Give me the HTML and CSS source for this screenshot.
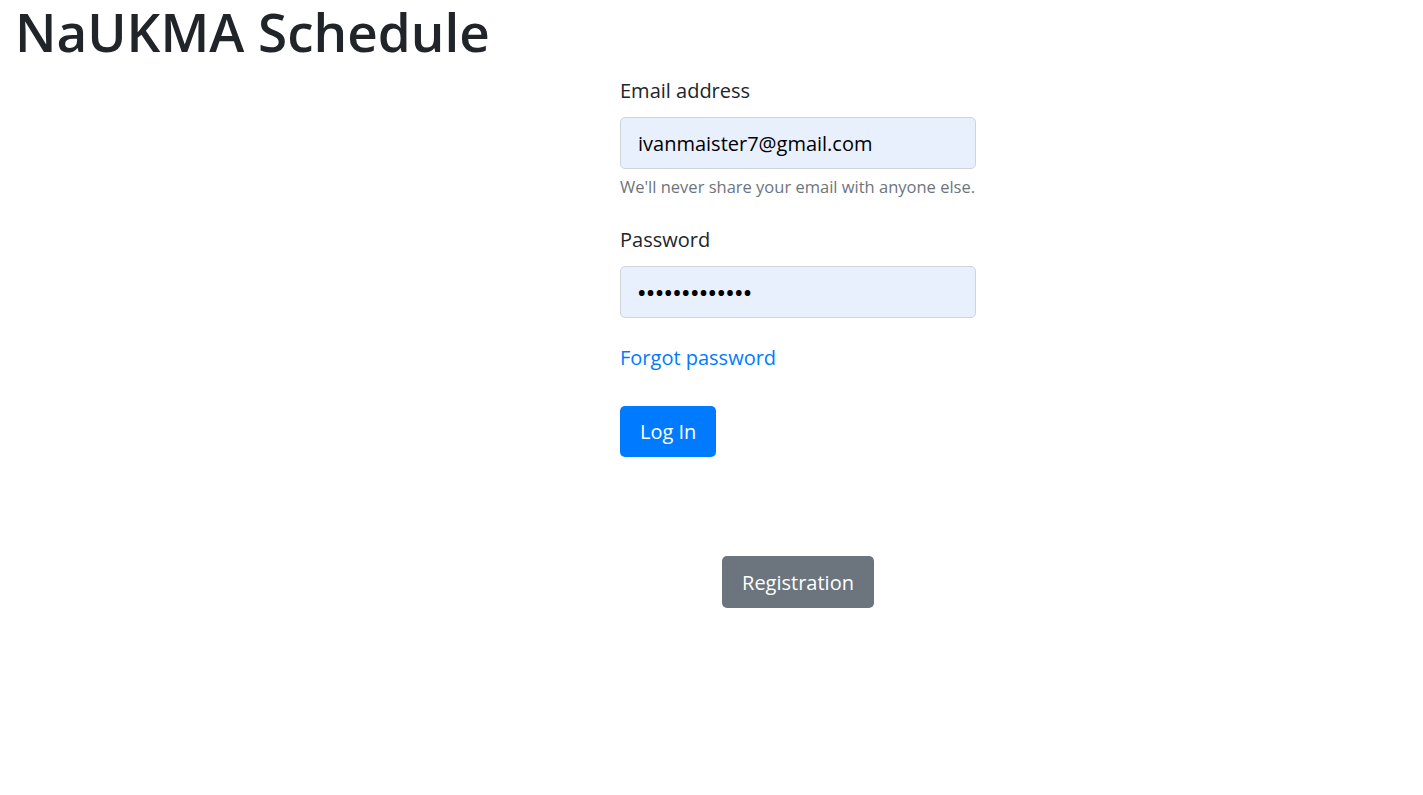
FILE: index.html
```html
<!DOCTYPE html>
<html>
<head>
<meta charset="utf-8">
<link rel="stylesheet" href="styles.css">
</head>
<body>
<h1 class="title">NaUKMA Schedule</h1>
<div class="layout">
  <form class="login">
    <div class="group">
      <label class="label">Email address</label>
      <div class="input">ivanmaister7@gmail.com</div>
      <div class="hint">We'll never share your email with anyone else.</div>
    </div>
    <div class="group last">
      <label class="label">Password</label>
      <div class="input pw">•••••••••••••</div>
    </div>
    <a class="forgot" href="#">Forgot password</a>
    <div class="actions"><span class="btn primary">Log In</span></div>
    <div class="reg"><span class="btn secondary">Registration</span></div>
  </form>
</div>
</body>
</html>
```
FILE: styles.css
```css
html, body { margin: 0; padding: 0; background: #fff; }
body { font-family: "Open Sans", "Noto Sans", sans-serif; color: #212529; }
.title {
  margin: 0;
  padding: 0 0 0 15px;
  font-size: 53px;
  font-weight: 600;
  line-height: 64px;
  color: #212529;
}
.layout {
  display: grid;
  grid-template-columns: 620px 356px 1fr;
}
.login { grid-column: 2; display: flex; flex-direction: column; padding-top: 12px; }
.group { display: flex; flex-direction: column; margin-bottom: 26px; }
.group.last { margin-bottom: 20px; }
.label { font-size: 20px; line-height: 30px; margin-bottom: 11px; }
.input {
  box-sizing: border-box;
  height: 52px;
  border: 1px solid #ced4da;
  border-radius: 5px;
  background: #e8f0fe;
  padding: 0 17px;
  display: flex; align-items: center;
  font-size: 20px;
  color: #000;
}
.pw { letter-spacing: 1.3px; font-size: 20px; font-weight: 700; }
.hint { font-size: 16.5px; line-height: 24px; margin-top: 6px; color: #6c757d; }
.forgot { color: #007bff; text-decoration: none; font-size: 20px; line-height: 30px; margin-top: 5px; align-self: flex-start; }
.actions { margin-top: 33px; display: flex; }
.btn {
  box-sizing: border-box;
  display: inline-flex; align-items: center; justify-content: center;
  height: 51px;
  padding: 0 20px;
  border-radius: 5px;
  color: #fff;
  font-size: 20px;
}
.primary { background: #007bff; }
.secondary { background: #6c757d; height: 52px; }
.reg { margin-top: 99px; display: flex; justify-content: center; }
```
